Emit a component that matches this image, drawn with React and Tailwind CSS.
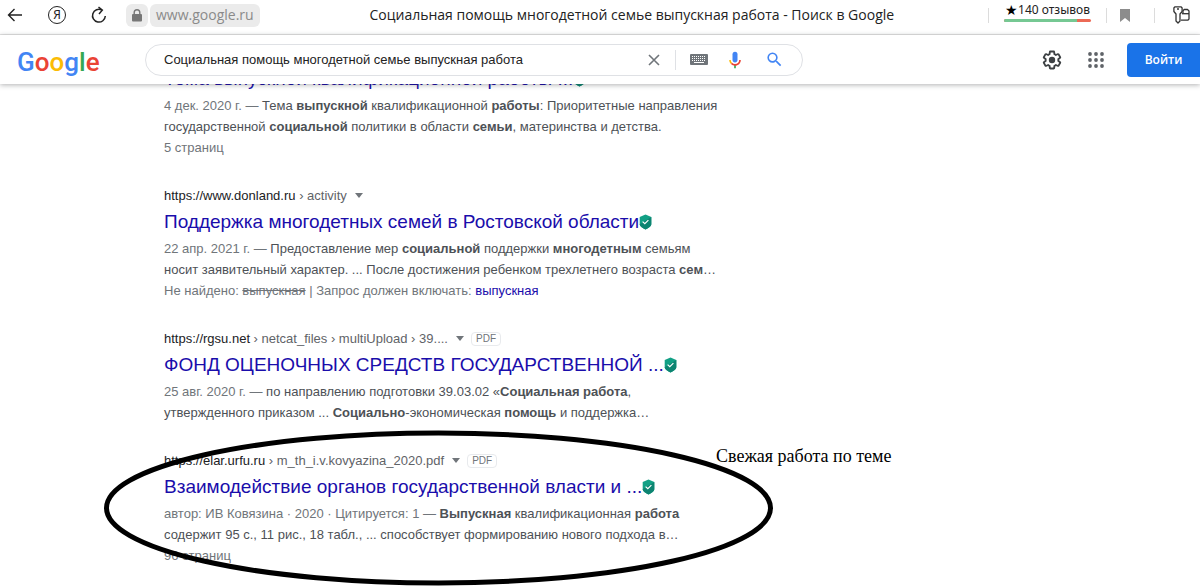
import React, { useState } from 'react';

const results = [
  {
    host: 'https://cyberleninka.ru',
    path: ' › article',
    title: 'Тема выпускной квалификационной работы ...',
    lines: [
      <><Muted>4 дек. 2020 г. — </Muted>Тема <b>выпускной</b> квалификационной <b>работы</b>: Приоритетные направления</>,
      <>государственной <b>социальной</b> политики в области <b>семьи</b>, материнства и детства.</>,
      <Muted>5 страниц</Muted>,
    ],
  },
  {
    host: 'https://www.donland.ru',
    path: ' › activity',
    title: 'Поддержка многодетных семей в Ростовской области',
    lines: [
      <><Muted>22 апр. 2021 г. — </Muted>Предоставление мер <b>социальной</b> поддержки <b>многодетным</b> семьям</>,
      <>носит заявительный характер. ... После достижения ребенком трехлетнего возраста <b>сем</b>…</>,
      <Muted>Не найдено: <s>выпускная</s> | Запрос должен включать: <a href="#include" className="text-[#1a0dab]">выпускная</a></Muted>,
    ],
  },
  {
    host: 'https://rgsu.net',
    path: ' › netcat_files › multiUpload › 39....',
    pdf: true,
    title: 'ФОНД ОЦЕНОЧНЫХ СРЕДСТВ ГОСУДАРСТВЕННОЙ ...',
    lines: [
      <><Muted>25 авг. 2020 г. — </Muted>по направлению подготовки 39.03.02 «<b>Социальная работа</b>,</>,
      <>утвержденного приказом ... <b>Социально</b>-экономическая <b>помощь</b> и поддержка…</>,
    ],
  },
  {
    host: 'https://elar.urfu.ru',
    path: ' › m_th_i.v.kovyazina_2020.pdf',
    pdf: true,
    marked: true,
    title: 'Взаимодействие органов государственной власти и ...',
    lines: [
      <><Muted>автор: ИВ Ковязина · 2020 · Цитируется: 1 — </Muted><b>Выпускная</b> квалификационная <b>работа</b></>,
      <>содержит 95 с., 11 рис., 18 табл., ... способствует формированию нового подхода в…</>,
      <Muted>96 страниц</Muted>,
    ],
  },
];

function Muted({ children }) {
  return <span className="text-[#70757a]">{children}</span>;
}

function BackIcon() {
  return (
    <svg width="16" height="16" viewBox="0 0 16 16" fill="none" stroke="#222" strokeWidth="1.4">
      <path d="M15 8H2M7.5 2 1.5 8l6 6" />
    </svg>
  );
}

function ReloadIcon() {
  return (
    <svg width="16" height="18" viewBox="0 0 16 18" fill="none" stroke="#222" strokeWidth="1.5">
      <path d="M14.3 10A6.4 6.4 0 1 1 10.8 4" />
      <path d="M7.5 1 11.3 4.2 8 8" />
    </svg>
  );
}

function LockIcon() {
  return (
    <svg width="10" height="13" viewBox="0 0 10 13">
      <path d="M2.2 6V3.6a2.8 2.8 0 0 1 5.6 0V6" fill="none" stroke="#777" strokeWidth="1.4" />
      <rect y="5" width="10" height="7.5" rx="1" fill="#777" />
    </svg>
  );
}

function KeyCardIcon() {
  return (
    <svg width="18" height="18" viewBox="0 0 18 18" fill="none" stroke="#333" strokeWidth="1.3" strokeLinejoin="round">
      <path d="M10 7V4.8L11.2 3.500H14.500L16 5v8l-1.200 1.200H8" />
      <path d="M9 7.700h7" />
      <path d="M1.800.8h6.400l.9 1.200v3.500L7 8v7l-2 2-2-2V8L.9 5.500V2z" fill="#fff" />
      <path d="M4 3h2" />
    </svg>
  );
}

function KeyboardIcon() {
  return (
    <svg width="18" height="11" viewBox="0 0 18 11">
      <rect width="18" height="11" rx="1" fill="#70757a" />
      <path d="M2 2.5h14M2 4.5h14M2 6.5h14" stroke="#fff" strokeWidth="1" strokeDasharray="1 1" />
      <path d="M4 8.5h10" stroke="#fff" strokeWidth="1" />
    </svg>
  );
}

function MicIcon() {
  return (
    <svg width="20" height="20" viewBox="0 0 24 24">
      <path fill="#4285f4" d="M12 15c1.66 0 3-1.31 3-2.97V5a3 3 0 0 0-6 0v7.03C9 13.69 10.34 15 12 15z" />
      <path fill="#34a853" d="M11 18.08h2V22h-2z" />
      <path fill="#fbbc05" d="M7.05 16.87A6.9 6.9 0 0 1 5 12h2c0 1.45.56 2.42 1.47 3.38l-1.42 1.49z" />
      <path fill="#ea4335" d="M12 16.93a4.97 4.97 0 0 1-3.54-1.55l-1.41 1.49A6.96 6.96 0 0 0 12 18.94c3.87 0 6.99-2.92 6.99-6.94h-2c0 2.92-2.24 4.93-4.99 4.93z" />
    </svg>
  );
}

function SearchIcon() {
  return (
    <svg width="19" height="19" viewBox="0 0 24 24" fill="#4285f4">
      <path d="M15.5 14h-.79l-.28-.27A6.47 6.47 0 0 0 16 9.5 6.5 6.5 0 1 0 9.5 16c1.61 0 3.09-.59 4.23-1.57l.27.28v.79l5 4.99L20.49 19l-4.99-5zm-6 0C7.01 14 5 11.99 5 9.5S7.01 5 9.5 5 14 7.01 14 9.5 11.99 14 9.5 14z" />
    </svg>
  );
}

function GearIcon() {
  return (
    <svg width="22" height="22" viewBox="0 0 24 24" fill="#3c4043">
      <path d="M13.85 22.25h-3.7c-.74 0-1.36-.54-1.45-1.27l-.27-1.89c-.27-.14-.53-.29-.79-.46l-1.8.72c-.7.26-1.47-.03-1.81-.65L2.2 15.53c-.35-.66-.2-1.44.36-1.88l1.53-1.19c-.01-.15-.02-.3-.02-.46 0-.15.01-.31.02-.46l-1.52-1.19c-.59-.45-.74-1.26-.37-1.88l1.85-3.19c.34-.62 1.11-.9 1.79-.63l1.81.73c.26-.17.52-.32.78-.46l.27-1.91c.09-.7.71-1.25 1.44-1.25h3.7c.74 0 1.36.54 1.45 1.27l.27 1.89c.27.14.53.29.79.46l1.8-.72c.71-.26 1.48.03 1.82.65l1.84 3.18c.36.66.2 1.44-.36 1.88l-1.52 1.19c.01.15.02.3.02.46s-.01.31-.02.46l1.52 1.19c.56.45.72 1.23.37 1.86l-1.86 3.22c-.34.62-1.11.9-1.8.63l-1.8-.72c-.26.17-.52.32-.78.46l-.27 1.91c-.1.68-.72 1.22-1.46 1.22zm-3.23-2h2.76l.37-2.55.53-.22c.44-.18.88-.44 1.34-.78l.45-.34 2.38.96 1.38-2.4-2.03-1.58.07-.56c.03-.26.06-.51.06-.78s-.03-.53-.06-.78l-.07-.56 2.03-1.58-1.39-2.4-2.39.96-.45-.35c-.42-.32-.87-.58-1.33-.77l-.52-.22-.37-2.55h-2.76l-.37 2.55-.53.21c-.44.19-.88.44-1.34.79l-.45.33-2.38-.95-1.39 2.39 2.03 1.58-.07.56a7 7 0 0 0-.06.79c0 .26.02.53.06.78l.07.56-2.03 1.58 1.38 2.4 2.39-.96.45.35c.43.33.86.58 1.33.77l.53.22.38 2.55z" />
      <circle cx="12" cy="12" r="3.5" />
    </svg>
  );
}

function AppsIcon() {
  return (
    <svg width="16" height="16" viewBox="0 0 16 16" fill="#5f6368">
      {[2, 8, 14].map((y) => [2, 8, 14].map((x) => <circle key={`${x}-${y}`} cx={x} cy={y} r="1.9" />))}
    </svg>
  );
}

function ShieldIcon() {
  return (
    <svg width="13" height="16" viewBox="0 0 13 16" className="shrink-0">
      <path d="M6.5.5 12.3 3v7.2c0 2-3.3 4-5.8 5.3C4 14.2.7 12.2.7 10.2V3z" fill="#12a085" />
      <path d="M.7 10.2 12.3 3v7.2c0 2-3.3 4-5.8 5.3C4 14.2.7 12.2.7 10.2z" fill="#0d8471" />
      <path d="m3.6 7.6 2.2 2.1 3.6-3.6" fill="none" stroke="#fff" strokeWidth="1.2" />
    </svg>
  );
}

function BrowserBar() {
  return (
    <div className="flex h-[35px] items-center border-b border-[#e4e4e4] pb-1 pl-[7px] pr-[9px]">
      <button aria-label="Назад"><BackIcon /></button>
      <button
        aria-label="Яндекс"
        className="ml-[25px] flex size-[18px] items-center justify-center rounded-full border border-[#222] font-['Noto_Sans'] text-xs leading-none text-[#222]"
      >
        Я
      </button>
      <button aria-label="Обновить" className="ml-[25px]"><ReloadIcon /></button>
      <span className="ml-[19px] flex h-[23px] w-[22px] items-center justify-center rounded-md bg-[#ebebeb]">
        <LockIcon />
      </span>
      <span className="ml-[2px] flex h-[23px] items-center rounded-md bg-[#ebebeb] px-[6px] font-['Open_Sans'] text-sm text-[#8a8a8a]">
        www.google.ru
      </span>
      <h1 className="flex-1 truncate pl-4 text-center font-['Open_Sans'] text-sm text-[#222]">
        Социальная помощь многодетной семье выпускная работа - Поиск в Google
      </h1>
      <span className="h-[15px] w-px bg-[#dcdcdc]" />
      <div className="mx-[15px] flex w-[87px] flex-col pb-2">
        <span className="flex items-center justify-center whitespace-nowrap font-['Noto_Sans'] text-xs leading-[18px] text-[#222]">
          <span className="text-sm leading-[18px] text-black">★</span>140 отзывов
        </span>
        <span className="flex h-[3px] overflow-hidden rounded-full bg-[#ec6a56]">
          <span className="w-[84%] bg-[#76c893]" />
        </span>
      </div>
      <span className="h-[15px] w-px bg-[#dcdcdc]" />
      <button aria-label="Закладка" className="mx-[13px]">
        <svg width="10" height="13" viewBox="0 0 10 13"><path d="M0 0h10v13L5 9l-5 4z" fill="#8c8c8c" /></svg>
      </button>
      <span className="ml-[11px] h-[15px] w-px bg-[#dcdcdc]" />
      <button aria-label="Пароли" className="ml-[18px]"><KeyCardIcon /></button>
    </div>
  );
}

function SearchHeader() {
  const [query, setQuery] = useState('Социальная помощь многодетной семье выпускная работа');

  return (
    <div className="flex h-[49px] items-center bg-white pl-[17px] shadow-[0_1px_5px_rgba(32,33,36,0.35)]">
      <a href="#home" className="w-[128px] pt-1 font-['Roboto'] text-[26px] font-medium leading-none text-[#4285f4]">
        G<span className="text-[#ea4335]">o</span><span className="text-[#fbbc05]">o</span>g
        <span className="text-[#34a853]">l</span><span className="text-[#ea4335]">e</span>
      </a>
      <form className="flex h-8 w-[658px] items-center rounded-full border border-[#dfe1e5] px-[18px]">
        <input
          aria-label="Поиск"
          value={query}
          onChange={(e) => setQuery(e.target.value)}
          className="min-w-0 flex-1 text-[13px] text-[#222] outline-none"
        />
        <button type="button" aria-label="Очистить" onClick={() => setQuery('')}>
          <svg width="12" height="12" viewBox="0 0 12 12" stroke="#70757a" strokeWidth="1.6">
            <path d="m1 1 10 10M11 1 1 11" />
          </svg>
        </button>
        <span className="ml-[15px] h-5 w-px bg-[#dfe1e5]" />
        <button type="button" aria-label="Клавиатура" className="ml-[14px]"><KeyboardIcon /></button>
        <button type="button" aria-label="Голосовой поиск" className="ml-[17px]"><MicIcon /></button>
        <button aria-label="Найти" className="ml-5"><SearchIcon /></button>
      </form>
      <div className="ml-auto flex items-center">
        <button aria-label="Настройки"><GearIcon /></button>
        <button aria-label="Приложения" className="ml-[25px]"><AppsIcon /></button>
        <a
          href="#login"
          className="ml-[23px] flex h-[34px] w-[73px] items-center justify-center rounded-l bg-[#1a73e8] font-['Open_Sans'] text-xs font-semibold text-white"
        >
          Войти
        </a>
      </div>
    </div>
  );
}

function Result({ host, path, pdf, title, lines, marked }) {
  return (
    <article className="relative mb-[27px]">
      <div className="flex h-[21px] items-center whitespace-pre text-[13px] text-[#5f6368]">
        <cite className="not-italic"><span className="text-[#202124]">{host}</span>{path}</cite>
        <button aria-label="Ещё" className="ml-2">
          <svg width="8" height="5" viewBox="0 0 8 5" fill="#70757a"><path d="M0 0h8L4 5z" /></svg>
        </button>
        {pdf && (
          <span className="ml-[7px] rounded-sm border border-[#e8eaed] px-1 text-[10px] leading-3 text-[#70757a]">
            PDF
          </span>
        )}
      </div>
      <h3 className="text-[19px] leading-8">
        <a href="#result" className="flex items-center text-[#1a0dab]">
          {title}
          <ShieldIcon />
        </a>
      </h3>
      <div className="text-[13px] leading-[21px] text-[#4d5156]">
        {lines.map((line, i) => <p key={i} className="whitespace-nowrap">{line}</p>)}
      </div>
      {marked && (
        <>
          <svg className="pointer-events-none absolute -left-[60px] -top-5" width="669" height="156" viewBox="0 0 669 156">
            <ellipse cx="334.5" cy="78" rx="332" ry="75" fill="none" stroke="#000" strokeWidth="5" />
          </svg>
          <p className="absolute -top-1 left-[552px] whitespace-nowrap font-['Liberation_Serif'] text-lg leading-[21px] text-black">
            Свежая работа по теме
          </p>
        </>
      )}
    </article>
  );
}

export default function App() {
  return (
    <div className="h-screen overflow-hidden bg-white font-['Liberation_Sans',sans-serif]">
      <header className="fixed inset-x-0 top-0 z-10 bg-white">
        <BrowserBar />
        <SearchHeader />
      </header>
      <main className="pl-[164px] pt-[42px]">
        {results.map((result) => <Result key={result.host} {...result} />)}
      </main>
    </div>
  );
}
